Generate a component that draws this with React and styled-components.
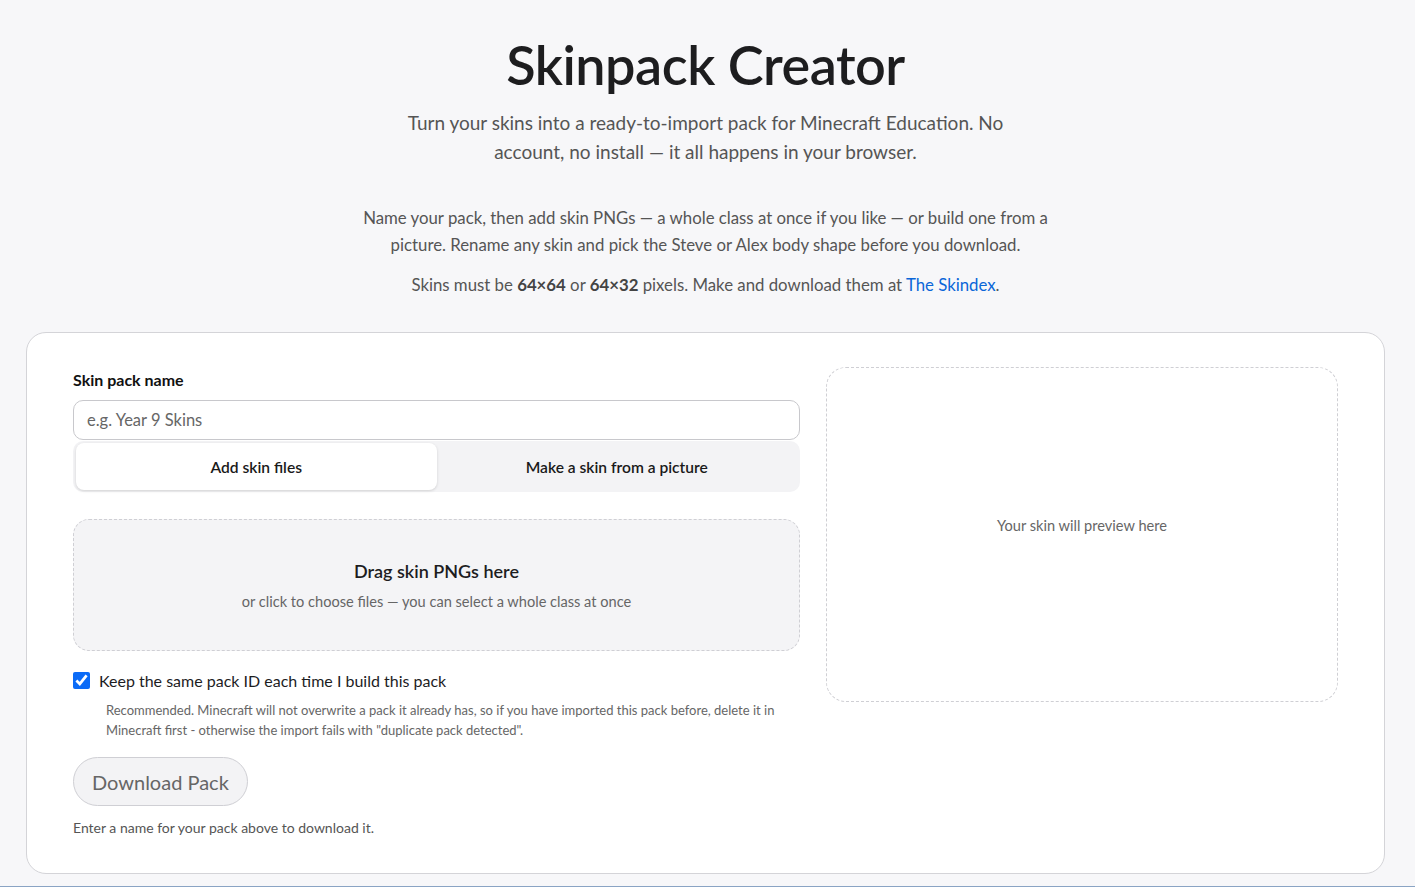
import React, { useState } from 'react';
import styled, { createGlobalStyle } from 'styled-components';

const GlobalStyle = createGlobalStyle`
  * { box-sizing: border-box; }
  body {
    margin: 0;
    background: #f7f7f9;
    color: #1d1d1f;
    font-family: "Segoe UI", Lato, "Noto Sans", sans-serif;
  }
`;

function App() {
  const [tab, setTab] = useState('files');
  const [keepId, setKeepId] = useState(true);
  const [name, setName] = useState('');

  return (
    <>
      <GlobalStyle />
      <Page>
        <Header>
          <Title>Skinpack Creator</Title>
          <Lead>
            Turn your skins into a ready-to-import pack for Minecraft Education. No
            account, no install — it all happens in your browser.
          </Lead>
          <Intro>
            Name your pack, then add skin PNGs — a whole class at once if you like — or build one from a
            picture. Rename any skin and pick the Steve or Alex body shape before you download.
          </Intro>
          <Intro>
            Skins must be <b>64×64</b> or <b>64×32</b> pixels. Make and download them at{' '}
            <Link href="#skindex">The Skindex</Link>.
          </Intro>
        </Header>

        <Card>
          <FormColumn>
            <Label htmlFor="pack-name">Skin pack name</Label>
            <NameInput
              id="pack-name"
              placeholder="e.g. Year 9 Skins"
              value={name}
              onChange={(e) => setName(e.target.value)}
            />
            <Tabs>
              <Tab type="button" active={tab === 'files'} onClick={() => setTab('files')}>
                Add skin files
              </Tab>
              <Tab type="button" active={tab === 'picture'} onClick={() => setTab('picture')}>
                Make a skin from a picture
              </Tab>
            </Tabs>

            <DropZone>
              <DropTitle>Drag skin PNGs here</DropTitle>
              <DropHint>or click to choose files — you can select a whole class at once</DropHint>
            </DropZone>

            <CheckRow>
              <Check
                type="checkbox"
                checked={keepId}
                onChange={() => setKeepId(!keepId)}
              />
              Keep the same pack ID each time I build this pack
            </CheckRow>
            <HelpText>
              Recommended. Minecraft will not overwrite a pack it already has, so if you have imported this pack before, delete it in
              Minecraft first - otherwise the import fails with &quot;duplicate pack detected&quot;.
            </HelpText>

            <DownloadButton type="button" disabled={!name}>Download Pack</DownloadButton>
            <Note>Enter a name for your pack above to download it.</Note>
          </FormColumn>

          <Preview>Your skin will preview here</Preview>
        </Card>
      </Page>
      <Footer />
    </>
  );
}

const Page = styled('main')`
  padding: 30px 30px 0 26px;
`;

const Header = styled('header')`
  display: flex;
  flex-direction: column;
  align-items: center;
  text-align: center;
  margin-bottom: 21px;
`;

const Title = styled('h1')`
  margin: 0;
  font-size: 54px;
  line-height: 70px;
  font-weight: 600;
  letter-spacing: -0.5px;
  color: #1d1d1f;
`;

const Lead = styled('p')`
  margin: 8px 0 38px;
  max-width: 630px;
  font-size: 19px;
  line-height: 29px;
  color: #555;
`;

const Intro = styled('p')`
  margin: 0 0 13px;
  max-width: 720px;
  font-size: 16.8px;
  line-height: 27px;
  color: #555;

  b {
    color: #444;
  }
`;

const Link = styled('a')`
  color: #0a66d8;
  text-decoration: none;
`;

const Card = styled('section')`
  display: grid;
  grid-template-columns: 1fr 512px;
  gap: 26px;
  align-items: start;
  background: #fff;
  border: 1px solid #d4d4d8;
  border-radius: 20px;
  padding: 34px 46px 37px 46px;
`;

const FormColumn = styled('div')`
  display: flex;
  flex-direction: column;
  align-items: flex-start;
`;

const Label = styled('label')`
  font-size: 16px;
  font-weight: 700;
  color: #111;
  margin-top: 3px;
  margin-bottom: 11px;
`;

const NameInput = styled('input')`
  width: 100%;
  height: 40px;
  padding: 0 13px;
  border: 1px solid #c8c8cc;
  border-radius: 10px;
  font: inherit;
  font-size: 16.5px;
  color: #222;
  background: #fff;

  &::placeholder {
    color: #666;
  }
`;

const Tabs = styled('div')`
  width: 100%;
  display: grid;
  grid-template-columns: 1fr 1fr;
  padding: 2px 3px;
  margin-top: 1px;
  background: #f3f3f5;
  border-radius: 10px;
`;

const Tab = styled('button')`
  height: 47px;
  border: none;
  border-radius: 8px;
  font: inherit;
  font-size: 15.6px;
  font-weight: 600;
  color: #1a1a1a;
  cursor: pointer;
  background: ${(p) => (p.active ? '#fff' : 'transparent')};
  box-shadow: ${(p) => (p.active ? '0 1px 3px rgba(0,0,0,0.14)' : 'none')};
`;

const DropZone = styled('div')`
  width: 100%;
  height: 132px;
  margin-top: 27px;
  display: flex;
  flex-direction: column;
  align-items: center;
  justify-content: center;
  gap: 11px;
  background: #f4f4f6;
  border: 1px dashed #cfcfd4;
  border-radius: 16px;
  cursor: pointer;
`;

const DropTitle = styled('div')`
  font-size: 18px;
  font-weight: 600;
  color: #1d1d1f;
`;

const DropHint = styled('div')`
  font-size: 14.6px;
  color: #666;
`;

const CheckRow = styled('label')`
  display: flex;
  align-items: center;
  gap: 9px;
  margin-top: 20px;
  font-size: 16px;
  color: #1d1d1f;
  cursor: pointer;
`;

const Check = styled('input')`
  width: 17px;
  height: 17px;
  margin: 0;
  accent-color: #0b6bf7;
`;

const HelpText = styled('p')`
  margin: 10px 0 0 33px;
  font-size: 13px;
  line-height: 20px;
  color: #666;
`;

const DownloadButton = styled('button')`
  margin-top: 17px;
  height: 49px;
  padding: 0 18px;
  border: 1px solid #cfcfd4;
  border-radius: 999px;
  background: #f3f3f5;
  font: inherit;
  font-size: 20px;
  color: #666;
`;

const Note = styled('p')`
  margin: 13px 0 0;
  font-size: 14px;
  color: #555;
`;

const Preview = styled('div')`
  height: 335px;
  padding-bottom: 18px;
  display: flex;
  align-items: center;
  justify-content: center;
  border: 1px dashed #cfcfd4;
  border-radius: 20px;
  font-size: 14.6px;
  color: #666;
`;

const Footer = styled('footer')`
  margin-top: 12px;
  border-top: 1px solid #8aa4c4;
  height: 20px;
`;

export default App;
